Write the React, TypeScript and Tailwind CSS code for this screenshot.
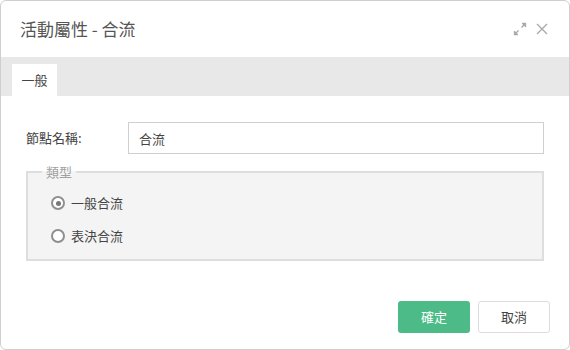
import React from "react"

const font = { fontFamily: '"Noto Sans CJK TC", "Noto Sans", sans-serif' }

function Radio({ label, checked = false }: { label: string; checked?: boolean }) {
  return (
    <label className="flex items-center gap-[6px] h-[22px] text-[13px] text-[#444]">
      <span className="w-[14px] h-[14px] rounded-full border-2 border-[#8f8f8f] bg-white flex items-center justify-center">
        {checked && <span className="w-[5px] h-[5px] rounded-full bg-[#777]"></span>}
      </span>
      {label}
    </label>
  )
}

export default function App() {
  return (
    <div className="w-[570px] h-[350px] bg-white" style={font}>
      <div className="w-full h-full flex flex-col border border-[#cfcfcf] rounded-[6px] overflow-hidden bg-white">
        {/* Header */}
        <div className="h-[56px] flex items-center justify-between pl-[19px] pr-[20px]">
          <div className="text-[17px] text-[#555]">活動屬性 - 合流</div>
          <div className="flex items-center gap-[8px] text-[#aaa]">
            <svg width="14" height="14" viewBox="0 0 14 14" fill="none" stroke="#aaa" strokeWidth="1.4">
              <path d="M8.5 5.5 L12.5 1.5" />
              <path d="M9 1.5 H12.5 V5" fill="#aaa" />
              <path d="M5.5 8.5 L1.5 12.5" />
              <path d="M1.5 9 V12.5 H5" fill="#aaa" />
            </svg>
            <svg width="14" height="14" viewBox="0 0 14 14" fill="none" stroke="#aaa" strokeWidth="1.4">
              <path d="M2 2 L12 12 M12 2 L2 12" />
            </svg>
          </div>
        </div>

        {/* Tabs */}
        <div className="h-[39px] bg-[#e8e8e8] pt-[7px] pl-[11px] flex">
          <div className="w-[45px] h-[32px] bg-white flex items-center justify-center text-[13px] text-[#444]">
            一般
          </div>
        </div>

        {/* Body */}
        <div className="flex-1 pt-[26px] pl-[25px] pr-[25px]">
          <div className="flex items-center">
            <div className="w-[102px] text-[13px] text-[#444]">節點名稱:</div>
            <input
              className="flex-1 h-[32px] border border-[#cfcfcf] px-[10px] text-[13px] text-[#444] outline-none"
              defaultValue="合流"
              style={font}
            />
          </div>

          <fieldset className="mt-[11px] border-2 border-[#dedede] bg-[#f4f4f4] pl-[23px] pb-[12px] pt-[13px]">
            <legend className="ml-[-9px] px-[4px] text-[13px] leading-[14px] text-[#a0a0a0]">類型</legend>
            <div className="flex flex-col gap-[11px]">
              <Radio label="一般合流" checked />
              <Radio label="表決合流" />
            </div>
          </fieldset>
        </div>

        {/* Footer */}
        <div className="flex justify-end gap-[8px] pr-[19px] pb-[16px]">
          <button className="w-[72px] h-[32px] rounded-[3px] bg-[#4cbb87] text-white text-[13px]">確定</button>
          <button className="w-[72px] h-[32px] rounded-[3px] bg-white border border-[#dcdcdc] text-[#444] text-[13px]">取消</button>
        </div>
      </div>
    </div>
  )
}
